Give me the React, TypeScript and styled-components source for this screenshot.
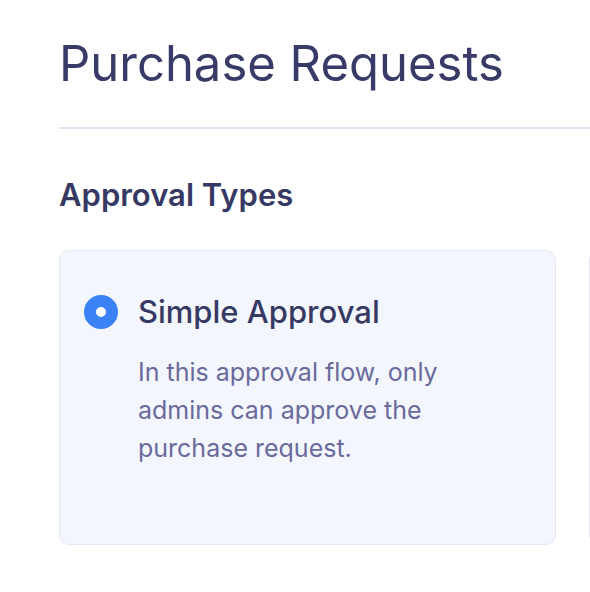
import React from "react";
import styled, { createGlobalStyle } from "styled-components";

const Global = createGlobalStyle`
  html, body { margin: 0; padding: 0; background: #ffffff; }
  body { font-family: Inter, "Noto Sans", sans-serif; overflow: hidden; }
`;

const Page = styled.div`
  width: 590px;
  height: 592px;
  overflow: hidden;
  padding: 34px 0 0 59px;
  box-sizing: border-box;
`;

const Title = styled.h1`
  margin: 0;
  font-size: 49px;
  line-height: 60px;
  font-weight: 400;
  color: #383b68;
`;

const Divider = styled.hr`
  margin: 33px 0 0 0;
  border: none;
  height: 2px;
  background: #e2e3f0;
`;

const SectionTitle = styled.h2`
  margin: 47px 0 0 0;
  font-size: 31px;
  line-height: 38px;
  font-weight: 600;
  color: #363963;
`;

const Cards = styled.div`
  display: grid;
  grid-template-columns: 497px 497px;
  gap: 33px;
  margin-top: 36px;
`;

const Card = styled.div<{ $selected?: boolean }>`
  display: flex;
  gap: 20px;
  align-items: flex-start;
  height: 295px;
  box-sizing: border-box;
  padding: 43px 24px 24px 24px;
  border-radius: 10px;
  border: 1.5px solid #e5e8f4;
  background: ${(p) => (p.$selected ? "#f3f6fd" : "#ffffff")};
`;

const Radio = styled.span<{ $checked?: boolean }>`
  flex: none;
  width: 34px;
  height: 34px;
  box-sizing: border-box;
  border-radius: 50%;
  margin-top: 1px;
  background: #ffffff;
  border: ${(p) => (p.$checked ? "12.5px solid #3b82f6" : "2px solid #cfd3e6")};
`;

const Body = styled.div`
  display: flex;
  flex-direction: column;
`;

const CardTitle = styled.div`
  font-size: 31px;
  line-height: 36px;
  font-weight: 500;
  color: #363963;
  white-space: nowrap;
`;

const CardText = styled.p`
  margin: 23px 0 0 0;
  font-size: 25px;
  line-height: 38px;
  font-weight: 400;
  color: #6a6a9c;
  max-width: 340px;
`;

export default function App() {
  return (
    <>
      <Global />
      <Page>
        <Title>Purchase Requests</Title>
        <Divider />
        <SectionTitle>Approval Types</SectionTitle>
        <Cards>
          <Card $selected>
            <Radio $checked />
            <Body>
              <CardTitle>Simple Approval</CardTitle>
              <CardText>
                In this approval flow, only admins can approve the purchase request.
              </CardText>
            </Body>
          </Card>
          <Card />
        </Cards>
      </Page>
    </>
  );
}
